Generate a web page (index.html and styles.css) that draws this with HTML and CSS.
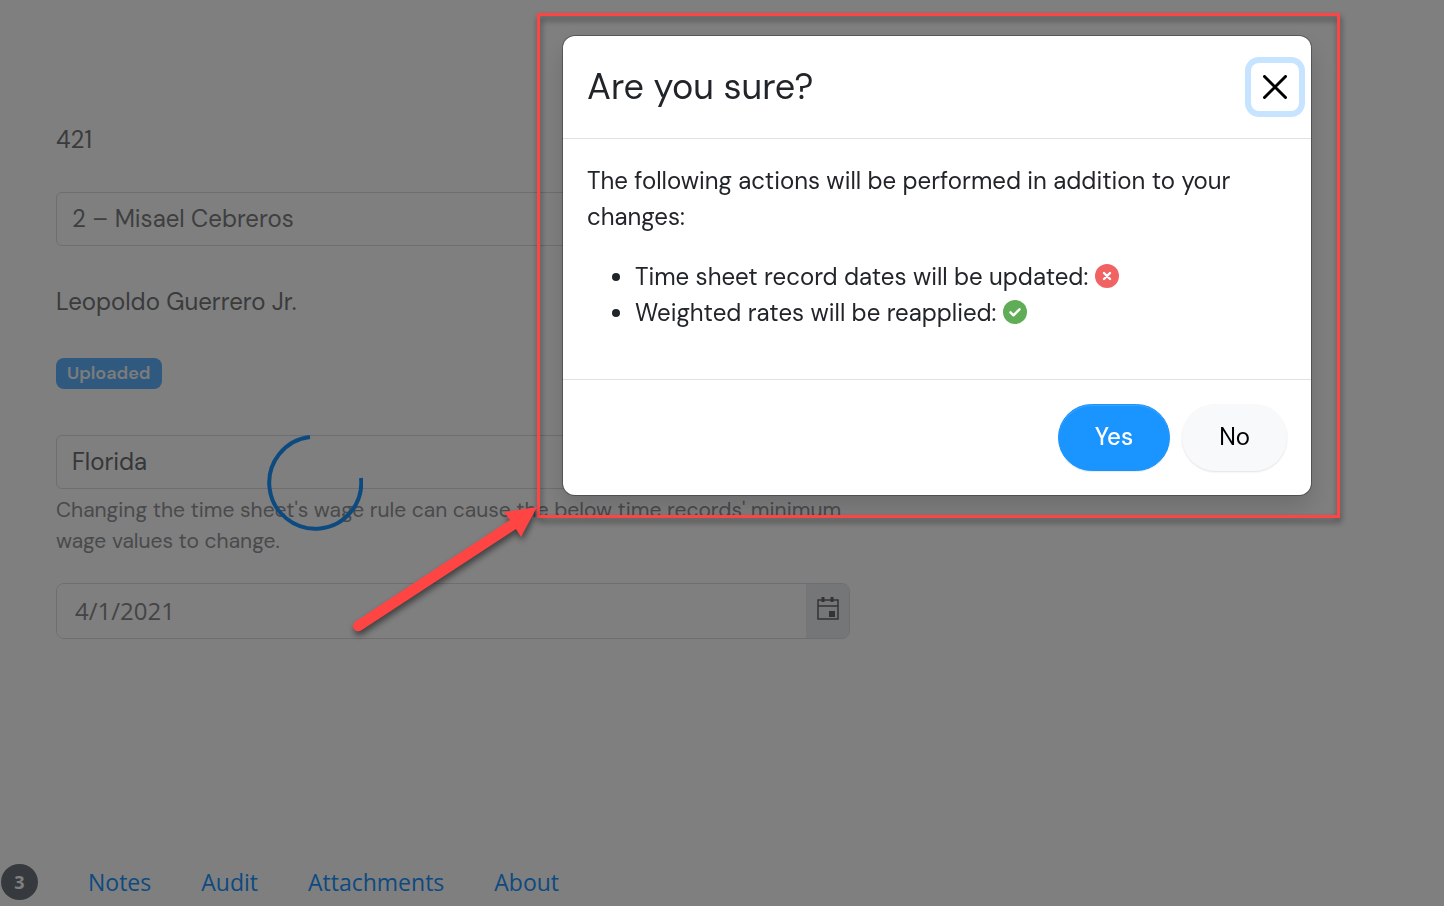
FILE: index.html
```html
<!DOCTYPE html>
<html lang="en">
<head>
    <meta charset="UTF-8" />
    <meta name="viewport" content="width=device-width, initial-scale=1.0" />
    <title>Time Sheet</title>
    <link rel="stylesheet" href="styles.css">
</head>
<body>
    <main class="page">
        <form class="timesheet-form">
            <p class="static-value">421</p>

            <select class="field field-muted" name="approver" aria-label="Approver">
                <option>2 – Misael Cebreros</option>
            </select>

            <p class="static-value">Leopoldo Guerrero Jr.</p>

            <span class="status-badge">Uploaded</span>

            <div class="wage-rule">
                <select class="field" name="wage_rule" aria-label="Wage rule" aria-describedby="wage-help">
                    <option>Florida</option>
                </select>
                <p class="help-text" id="wage-help">Changing the time sheet's wage rule can cause the below time records' minimum wage values to change.</p>
            </div>

            <div class="date-group">
                <input type="text" class="date-input" name="date" value="4/1/2021" aria-label="Date" />
                <button type="button" class="date-button" aria-label="Open calendar">
                    <svg width="22" height="24" viewBox="0 0 22 24" fill="none" stroke="#666" stroke-width="1.5">
                        <path d="M1 3h20v19H1zM1 9h20" />
                        <path d="M6 0v5M15 0v5" stroke-width="3" />
                        <path d="M12 14h6v6h-6z" fill="#666" stroke="none" />
                    </svg>
                </button>
            </div>
        </form>

        <nav class="tabs">
            <span class="count">3</span>
            <a href="#notes">Notes</a>
            <a href="#audit">Audit</a>
            <a href="#attachments">Attachments</a>
            <a href="#about">About</a>
        </nav>
    </main>

    <svg class="spinner" width="96" height="96" viewBox="0 0 96 96" fill="none" stroke="#1a94ff" stroke-width="4">
        <path d="M94 43A46 46 0 1 1 43 2" />
    </svg>

    <div class="backdrop">
        <div class="modal" role="dialog" aria-modal="true" aria-labelledby="modal-title">
            <div class="modal-header">
                <h2 id="modal-title">Are you sure?</h2>
                <button type="button" class="btn-close" aria-label="Close">
                    <svg width="24" height="24" viewBox="0 0 24 24" fill="none" stroke="#000" stroke-width="3" stroke-linecap="round">
                        <path d="M1.500 1.500l21 21M22.500 1.500l-21 21" />
                    </svg>
                </button>
            </div>
            <div class="modal-body">
                <p>The following actions will be performed in addition to your changes:</p>
                <ul>
                    <li>Time sheet record dates will be updated:
                        <svg class="icon" width="24" height="24" viewBox="0 0 24 24" fill="none" stroke="#fff" stroke-width="2.400" stroke-linecap="round">
                            <circle cx="12" cy="12" r="12" fill="#f16363" stroke="none" />
                            <path d="M9 9l6 6M15 9l-6 6" />
                        </svg>
                    </li>
                    <li>Weighted rates will be reapplied:
                        <svg class="icon" width="24" height="24" viewBox="0 0 24 24" fill="none" stroke="#fff" stroke-width="2.400" stroke-linecap="round" stroke-linejoin="round">
                            <circle cx="12" cy="12" r="12" fill="#5fad56" stroke="none" />
                            <path d="M7.500 12.300l3 3 6-6" />
                        </svg>
                    </li>
                </ul>
            </div>
            <div class="modal-footer">
                <button type="button" class="btn btn-primary">Yes</button>
                <button type="button" class="btn btn-light">No</button>
            </div>
            <div class="highlight"></div>
            <svg class="arrow" width="190" height="130" viewBox="0 0 190 130">
                <path fill="#ff4444" d="M187 0l-33 5 6 8L5.500 114.500a5 5 0 0 0 5.500 9L166 22l5 8z" />
            </svg>
        </div>
    </div>
</body>
</html>
```

FILE: styles.css
```css
body {
    font-family: "DM Sans", Inter, sans-serif;
    font-size: 24px;
    line-height: 36px;
    font-weight: 400;
    color: #212529;
    background-color: #fff;
    margin: 0;
}

p, h2, ul {
    margin: 0;
}

button, input, select {
    font: inherit;
}

/* Page behind the dialog */
.page {
    display: flex;
    flex-direction: column;
    justify-content: space-between;
    min-height: 100vh;
    box-sizing: border-box;
    padding: 110px 0 6px;
}

.timesheet-form {
    display: flex;
    flex-direction: column;
    align-items: flex-start;
    gap: 26px;
    width: 55%;
    margin-left: 56px;
}

.static-value {
    margin: 12px 0 8px;
    color: #747678;
}

.field {
    appearance: none;
    width: 100%;
    height: 54px;
    padding: 0 15px;
    border: 1px solid #dcdcdc;
    border-radius: 6px;
    background-color: #fff;
    color: #6c6e70;
}

.field-muted {
    color: #7c7e80;
}

.status-badge {
    margin: 4px 0 20px;
    padding: 0 11px;
    border-radius: 8px;
    background-color: #5eb3fc;
    color: #f8f8f8;
    font-size: 18px;
    line-height: 31px;
    font-weight: 600;
}

.help-text {
    margin-top: 6px;
    color: #929497;
    font-size: 21px;
    line-height: 31px;
}

.wage-rule {
    width: 100%;
}

.wage-rule .field {
    display: block;
}

.date-group {
    display: flex;
    width: 100%;
    height: 56px;
    box-sizing: border-box;
    border: 1px solid #dcdcdc;
    border-radius: 8px;
    overflow: hidden;
}

.date-input {
    flex: 1;
    min-width: 0;
    padding: 0 18px;
    border: none;
    background-color: #fff;
    color: #88898c;
    font-family: "Open Sans", sans-serif;
}

.date-button {
    display: grid;
    place-items: center;
    width: 43px;
    padding: 0 0 4px;
    border: none;
    background-color: #e9ecef;
}

/* Bottom tabs */
.tabs {
    display: flex;
    align-items: center;
    gap: 50px;
    font-family: "Open Sans", sans-serif;
    font-size: 23px;
}

.tabs a {
    color: #1a94ff;
    text-decoration: none;
}

.count {
    width: 37px;
    margin-left: 1px;
    border-radius: 50%;
    background-color: #6c757d;
    color: #fff;
    font-size: 18px;
    font-weight: 700;
    text-align: center;
}

.spinner {
    position: absolute;
    top: 435px;
    left: 267px;
}

/* Dialog */
.backdrop {
    position: fixed;
    inset: 0;
    display: flex;
    justify-content: flex-end;
    align-items: flex-start;
    padding: 36px 133px;
    background-color: rgba(0, 0, 0, 0.5);
}

.modal {
    position: relative;
    width: 100%;
    max-width: 748px;
    border-radius: 12px;
    background-color: #fff;
    box-shadow: 0 0 0 1px rgba(0, 0, 0, 0.3), 0 12px 24px rgba(0, 0, 0, 0.15);
}

.modal-header {
    display: flex;
    justify-content: space-between;
    align-items: center;
    padding: 24px 12px 24px 24px;
    border-bottom: 1px solid #dee2e6;
}

.modal-header h2 {
    font-size: 36px;
    line-height: 54px;
    font-weight: 400;
}

.btn-close {
    display: grid;
    place-items: center;
    width: 48px;
    height: 48px;
    padding: 0;
    border: none;
    border-radius: 8px;
    background-color: #fff;
    box-shadow: 0 0 0 6px #c6e4ff;
}

.modal-body {
    padding: 24px 24px 48px;
}

.modal-body ul {
    margin-top: 24px;
    padding-left: 48px;
}

.icon {
    vertical-align: -3px;
}

.modal-footer {
    display: flex;
    justify-content: flex-end;
    gap: 12px;
    padding: 24px;
    border-top: 1px solid #dee2e6;
}

.btn {
    padding: 14px 36px 15px;
    border: 1px solid transparent;
    border-radius: 34px;
    cursor: pointer;
}

.btn-primary {
    border-color: #1a94ff;
    background-color: #1a94ff;
    color: #fff;
    font-weight: 500;
    box-shadow: inset 0 1px 0 rgba(255, 255, 255, 0.15), 0 1px 1px rgba(0, 0, 0, 0.08);
}

.btn-light {
    background-color: #f8f9fa;
    color: #000;
    box-shadow: 0 1px 2px rgba(0, 0, 0, 0.12);
}

/* Marker around the dialog */
.highlight {
    position: absolute;
    inset: -23px -29px -23px -26px;
    border: 3px solid #ff4444;
    filter: drop-shadow(1px 4px 3px rgba(0, 0, 0, 0.5));
    pointer-events: none;
}

.arrow {
    position: absolute;
    top: 471px;
    left: -213px;
    overflow: visible;
    filter: drop-shadow(1px 4px 3px rgba(0, 0, 0, 0.5));
    pointer-events: none;
}
```
